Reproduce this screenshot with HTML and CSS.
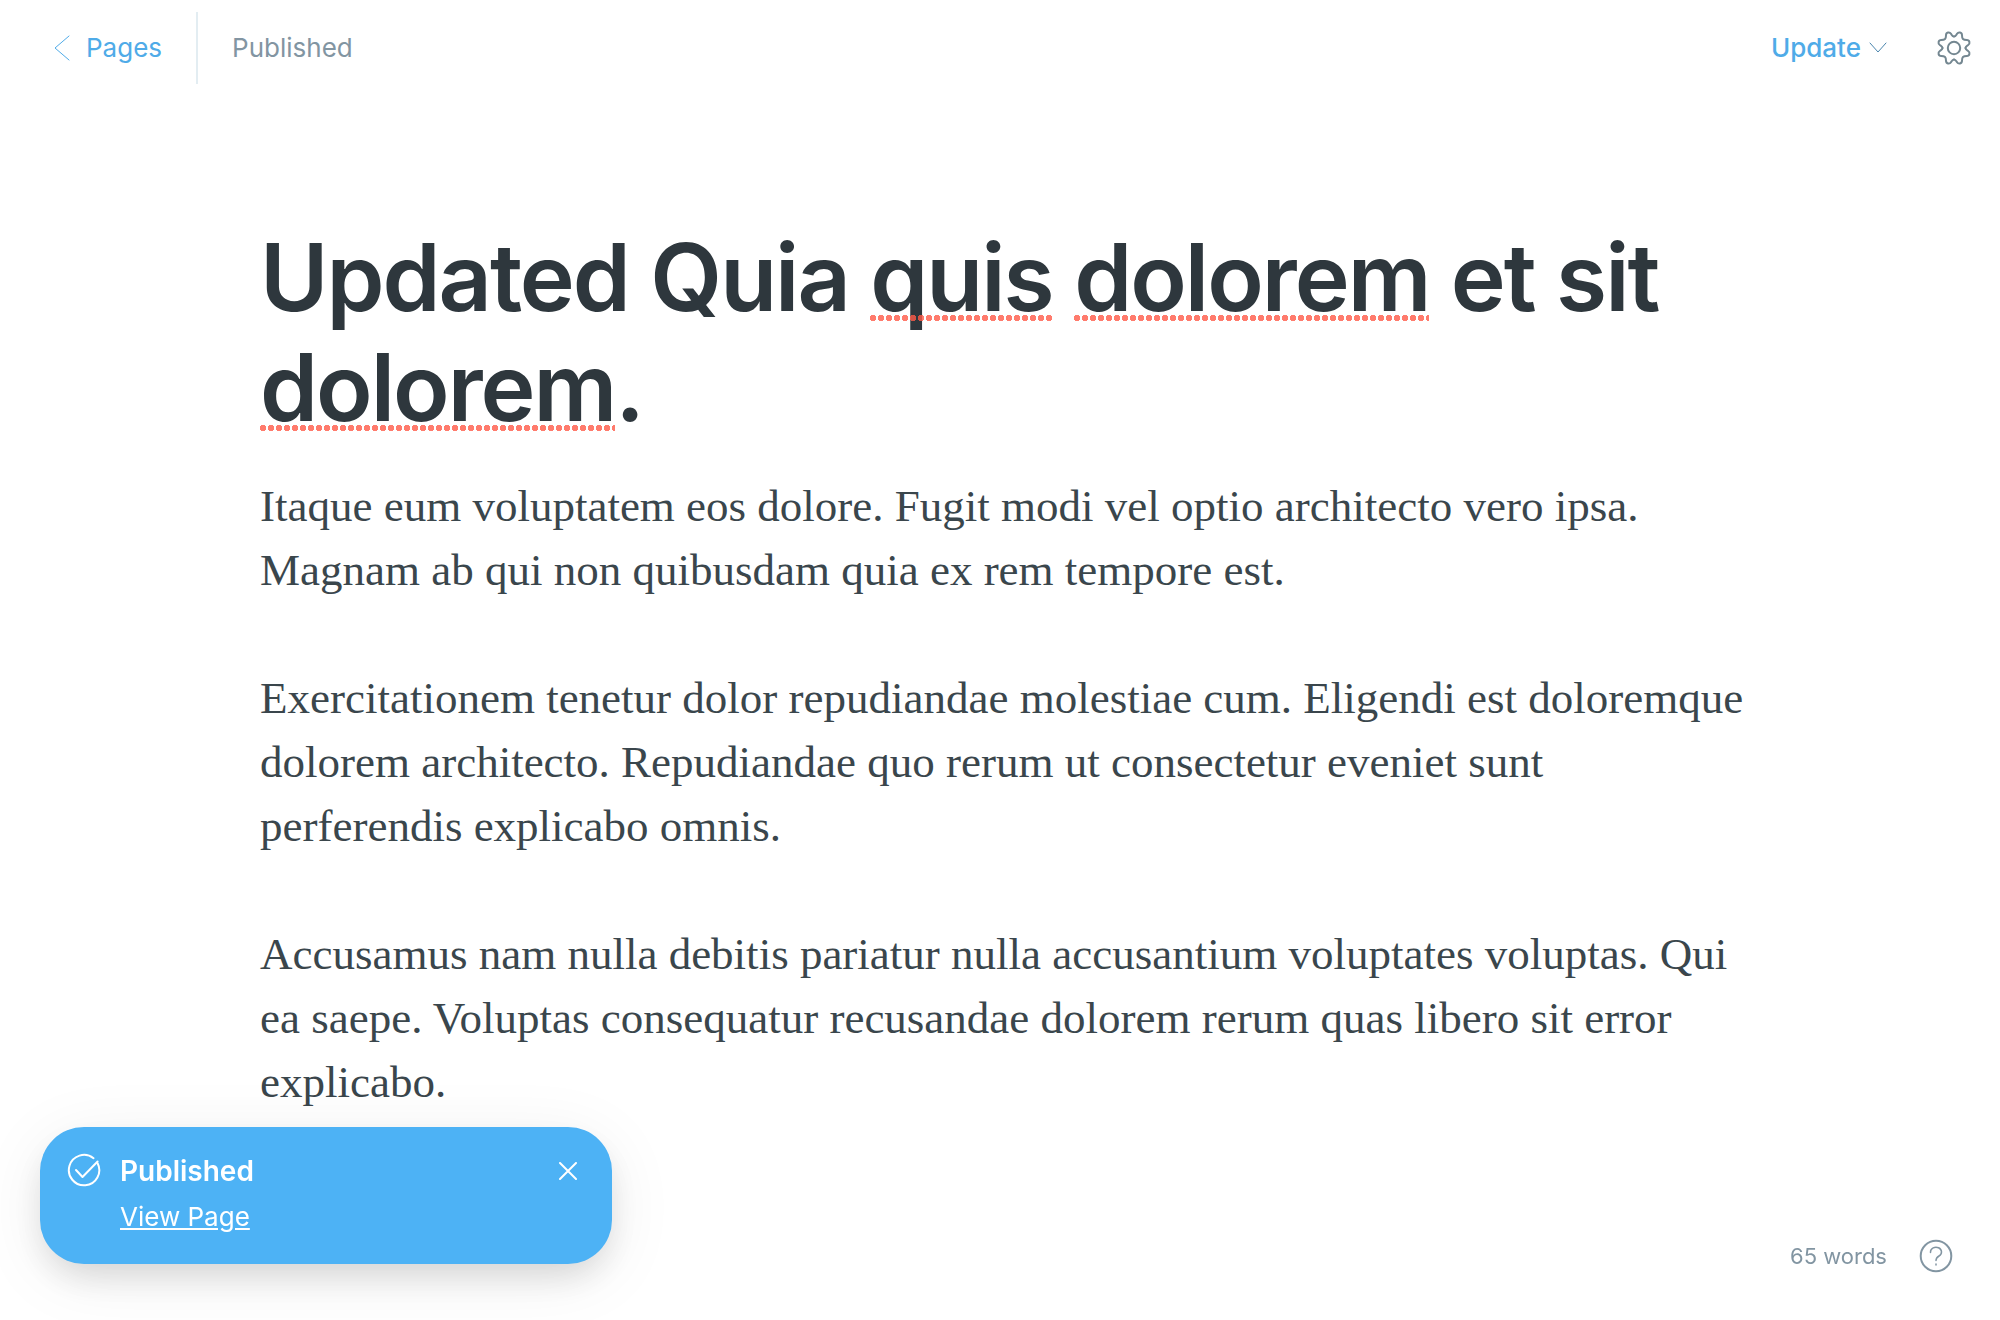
FILE: index.html
```html
<!DOCTYPE html>
<html lang="en">
<head>
<meta charset="utf-8">
<meta name="viewport" content="width=device-width, initial-scale=1">
<title>Editor</title>
<link rel="stylesheet" href="styles.css">
</head>
<body>
<header class="topbar">
  <a class="back" href="#pages">
    <svg class="back-icon" viewBox="0 0 16 26" aria-hidden="true"><path d="M15 1 1 13l14 12"/></svg>
    Pages
  </a>
  <span class="status">Published</span>
  <div class="actions">
    <button class="update" type="button">Update
      <svg class="chevron" viewBox="0 0 18 12" aria-hidden="true"><path d="m1 1 8 9 8-9"/></svg>
    </button>
    <button class="icon-button" type="button" aria-label="Settings">
      <svg class="gear" viewBox="-17 -17 34 34" aria-hidden="true">
        <circle r="6.2"/>
        <path id="gear-quarter" d="M0-11.500C1.600-11.500 2.200-13 3-14.200C4.400-16.300 8-15.800 8-12.800C8-9 9-8 12.800-8C15.800-8 16.300-4.400 14.200-3C13-2.200 11.500-1.600 11.500 0"/>
        <use href="#gear-quarter" transform="rotate(90)"/>
        <use href="#gear-quarter" transform="rotate(180)"/>
        <use href="#gear-quarter" transform="rotate(270)"/>
      </svg>
    </button>
  </div>
</header>

<main class="editor">
  <h1 class="title">Updated Quia <span class="misspelt">quis</span> <span class="misspelt">dolorem</span> et sit <span class="misspelt">dolorem</span>.</h1>
  <div class="content">
    <p>Itaque eum voluptatem eos dolore. Fugit modi vel optio architecto vero ipsa. Magnam ab qui non quibusdam quia ex rem tempore est.</p>
    <p>Exercitationem tenetur dolor repudiandae molestiae cum. Eligendi est doloremque dolorem architecto. Repudiandae quo rerum ut consectetur eveniet sunt perferendis explicabo omnis.</p>
    <p>Accusamus nam nulla debitis pariatur nulla accusantium voluptates voluptas. Qui ea saepe. Voluptas consequatur recusandae dolorem rerum quas libero sit error explicabo.</p>
  </div>
</main>

<aside class="toast" role="status">
  <svg class="check" viewBox="0 0 34 34" aria-hidden="true"><path d="M26.500 5.200A15.200 15.200 0 1 0 30.600 10.200"/><path d="m9 17 6.500 7L30.600 8.500"/></svg>
  <div class="toast-text">
    <strong class="toast-title">Published</strong>
    <a class="toast-link" href="#view">View Page</a>
  </div>
  <button class="toast-close" type="button" aria-label="Close">
    <svg class="cross" viewBox="0 0 18 18" aria-hidden="true"><path d="m1 1 16 16M17 1 1 17"/></svg>
  </button>
</aside>

<footer class="statusbar">
  <span>65 words</span>
  <button class="icon-button" type="button" aria-label="Help">
    <svg class="help" viewBox="0 0 34 34" aria-hidden="true"><circle cx="17" cy="17" r="15.300"/><path class="help-mark" d="M11.500 13.500v-.5a5.500 4.800 0 1 1 8.500 4c-2 1.200-3 2-3 4.500M17 25v1"/></svg>
  </button>
</footer>
</body>
</html>
```
FILE: styles.css
```css
* { box-sizing: border-box; }

body {
  margin: 0;
  min-height: 100vh;
  background: #fff;
  color: #2e373d;
  font-family: Inter, "Liberation Sans", sans-serif;
}

button {
  display: flex;
  align-items: center;
  padding: 0;
  border: 0;
  background: none;
  color: inherit;
  font: inherit;
  letter-spacing: inherit;
  cursor: pointer;
}

svg {
  display: block;
  fill: none;
  stroke: currentColor;
  stroke-width: 2;
  stroke-linecap: round;
  stroke-linejoin: round;
}

/* Top bar */
.topbar {
  display: flex;
  align-items: center;
  height: 96px;
  padding: 0 29px 0 54px;
  font-size: 26px;
  line-height: 72px;
}

.back {
  display: flex;
  align-items: center;
  gap: 16px;
  padding-right: 34px;
  border-right: 2px solid #e3edf2;
  color: #4fabe8;
  text-decoration: none;
}

.back-icon { width: 16px; height: 26px; stroke-width: 1; }

.status { padding-left: 34px; color: #8295a2; }

.actions {
  display: flex;
  align-items: center;
  gap: 50px;
  margin-left: auto;
}

.update { gap: 8px; color: #4fabe8; font-weight: 500; }
.chevron { width: 18px; height: 12px; color: #4a85ad; stroke-width: 1; }
.gear { width: 34px; height: 34px; color: #748791; }

/* Document */
.editor {
  max-width: 1480px;
  margin: 0 auto;
  padding: 126px 0 120px;
}

.title {
  margin: 0 0 32px;
  font-size: 93px;
  font-weight: 600;
  line-height: 110px;
  letter-spacing: -2px;
}

.misspelt { position: relative; }

.misspelt::after {
  content: "";
  position: absolute;
  left: 0;
  right: 0;
  bottom: 12px;
  height: 6px;
  background: radial-gradient(circle at 3px 3px, rgba(255, 90, 72, 0.8) 3px, transparent 3px) 0 0 / 8px 6px;
}

/* The text column hangs slightly past the title's right edge */
.content {
  margin-right: -8px;
  color: #3a464c;
  font-family: Georgia, "Liberation Serif", serif;
  font-size: 45px;
  line-height: 64px;
}

.content p { margin: 0 0 64px; }

/* Notification */
.toast {
  position: fixed;
  left: 40px;
  bottom: 56px;
  display: flex;
  align-items: flex-start;
  gap: 19px;
  width: 572px;
  padding: 26px 35px 29px 27px;
  border-radius: 44px;
  background: #4db2f5;
  box-shadow: 0 16px 36px -6px rgba(0, 0, 0, 0.14), 0 12px 70px rgba(0, 0, 0, 0.07);
  color: #fff;
}

.check { width: 34px; height: 34px; }

.toast-text {
  display: flex;
  flex: 1;
  flex-direction: column;
  align-items: flex-start;
  gap: 10px;
  line-height: 36px;
}

.toast-title { font-size: 28px; font-weight: 600; }
.toast-link { color: inherit; font-size: 26px; }
.toast-close { height: 36px; }
.cross { width: 18px; height: 18px; }

/* Word count */
.statusbar {
  position: fixed;
  right: 47px;
  bottom: 47px;
  display: flex;
  align-items: center;
  gap: 32px;
  color: #8295a2;
  font-size: 22px;
}

.help { width: 34px; height: 34px; }
.help-mark { stroke-width: 1.5; }
```
